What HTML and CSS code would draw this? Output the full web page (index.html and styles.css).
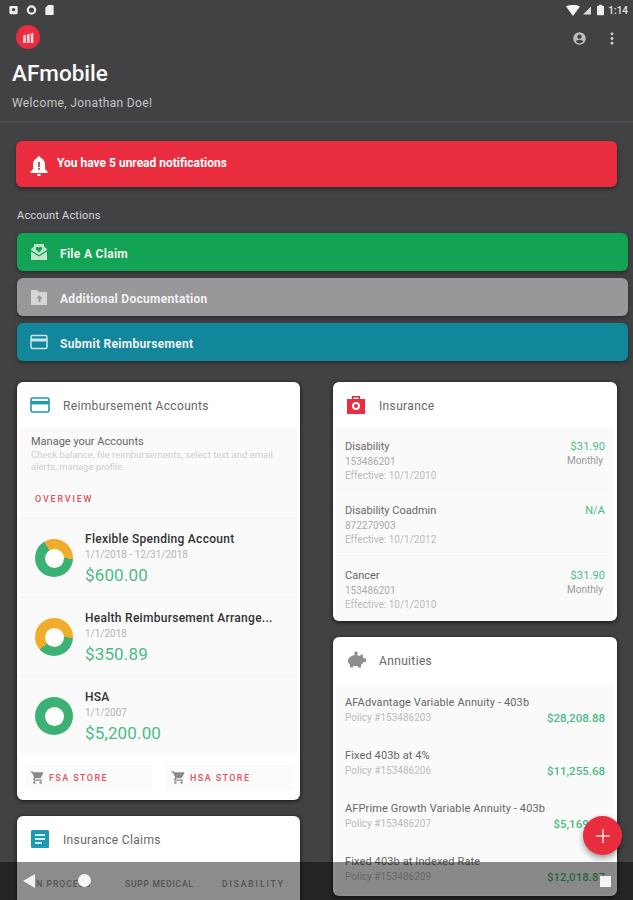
FILE: index.html
```html
<!DOCTYPE html>
<html lang="en">
<head>
<meta charset="utf-8">
<title>AFmobile</title>
<link rel="stylesheet" href="styles.css">
</head>
<body>
<div class="screen">
  <div class="status">
    <div class="status-left">
      <svg class="st" viewBox="0 0 12 12"><rect x="1.500" y="1.500" width="9" height="9" rx="1.500" fill="#eee"/><circle cx="6" cy="5.500" r="1.800" fill="#444"/></svg>
      <svg class="st" viewBox="0 0 12 12"><circle cx="6" cy="6" r="4" fill="none" stroke="#eee" stroke-width="2.400"/></svg>
      <svg class="st" viewBox="0 0 12 12"><path d="M4.500 .5h5a1 1 0 0 1 1 1v9a1 1 0 0 1-1 1h-7a1 1 0 0 1-1-1V3.500z" fill="#eee"/></svg>
    </div>
    <div class="status-right">
      <svg class="wifi" viewBox="0 0 14 11"><path d="M0 1.500Q7-2 14 1.500L7 11z" fill="#f2f2f2"/></svg>
      <svg class="sig" viewBox="0 0 9 9"><path d="M9 0v9H0z" fill="#ddd"/></svg>
      <svg class="bat" viewBox="0 0 8 12"><path d="M2.500 0h3v1H7a1 1 0 0 1 1 1v9a1 1 0 0 1-1 1H1a1 1 0 0 1-1-1V2a1 1 0 0 1 1-1h1.500z" fill="#eee"/></svg>
      <span class="time">1:14</span>
    </div>
  </div>

  <header class="head">
    <div class="toolbar">
      <div class="logo">
        <svg viewBox="0 0 12 12" width="13" height="13"><path d="M1 4l2.500-.6V11H1zM4.500 3.200L7 2.600V11H4.500zM8 2.400l2.500-.8V11H8z" fill="#f7d3d7"/></svg>
      </div>
      <div class="tool-icons">
        <svg class="acct" viewBox="0 0 24 24"><path fill="#bdbdbd" d="M12 2a10 10 0 1 0 0 20 10 10 0 0 0 0-20zm0 3.500a3.500 3.500 0 1 1 0 7 3.500 3.500 0 0 1 0-7zm0 14.300a7.700 7.700 0 0 1-6-2.900c1-1.800 3.800-2.900 6-2.900s5 1.100 6 2.900a7.700 7.700 0 0 1-6 2.900z"/></svg>
        <svg class="more" viewBox="0 0 4 14"><circle cx="2" cy="2" r="1.500" fill="#d5d5d5"/><circle cx="2" cy="7" r="1.500" fill="#d5d5d5"/><circle cx="2" cy="12" r="1.500" fill="#d5d5d5"/></svg>
      </div>
    </div>
    <h1 class="title">AFmobile</h1>
    <p class="welcome">Welcome, Jonathan Doe!</p>
  </header>

  <main class="content">
    <div class="alert">
      <svg class="alert-icon" viewBox="0 0 18 20"><path fill="#fff" d="M9 0a1.500 1.500 0 0 1 1.500 1.500v.6C13.200 2.800 15 5.200 15 8v5l2.500 2.500V17H.5v-1.500L3 13V8c0-2.800 1.800-5.200 4.500-5.900v-.6A1.500 1.500 0 0 1 9 0zM7 18h4a2 2 0 0 1-4 0z"/><rect x="8.100" y="6" width="1.800" height="5" fill="#e92d3f"/><rect x="8.100" y="12" width="1.800" height="1.800" fill="#e92d3f"/></svg>
      <span>You have 5 unread notifications</span>
    </div>

    <div class="section-label">Account Actions</div>

    <div class="actions">
      <div class="action green">
        <svg class="action-icon" viewBox="0 0 18 18"><path fill="#bfe6cd" d="M1 6l3-2.500V1h10v2.500L17 6v11H1z"/><path fill="#12a454" d="M1 7l8 5 8-5v1.500l-8 5-8-5z"/><path fill="#12a454" d="M9 9.500L6.200 6.700a1.700 1.700 0 0 1 2.400-2.400l.4.400.4-.4a1.700 1.700 0 0 1 2.400 2.400z"/></svg>
        <span>File A Claim</span>
      </div>
      <div class="action grey">
        <svg class="action-icon" viewBox="0 0 18 18"><path fill="#d5d5d7" d="M1 2h6l2 2h8v13H1z"/><path fill="#98989b" d="M9.500 7l3 3.500h-2V14h-2v-3.500h-2z"/></svg>
        <span>Additional Documentation</span>
      </div>
      <div class="action teal">
        <svg class="action-icon" viewBox="0 0 18 18"><rect x="1" y="2.500" width="16" height="13" rx="1.500" fill="none" stroke="#c7e5ea" stroke-width="1.500"/><rect x="1" y="5.500" width="16" height="3" fill="#c7e5ea"/></svg>
        <span>Submit Reimbursement</span>
      </div>
    </div>

    <div class="columns">
      <div class="col">
        <section class="card">
          <div class="card-head">
            <svg class="card-icon" viewBox="0 0 20 20"><rect x="1" y="3" width="18" height="14" rx="1.500" fill="none" stroke="#1c9bb0" stroke-width="1.600"/><rect x="1" y="6" width="18" height="3.400" fill="#1c9bb0"/></svg>
            <span>Reimbursement Accounts</span>
          </div>
          <div class="panel">
            <div class="intro">
              <div class="intro-title">Manage your Accounts</div>
              <div class="intro-text">Check balance, file reimbursements, select text and email alerts, manage profile.</div>
              <div class="overview">OVERVIEW</div>
            </div>
            <div class="acct-row">
              <div class="donut d1"></div>
              <div class="acct-info">
                <div class="acct-name">Flexible Spending Account</div>
                <div class="acct-date">1/1/2018 - 12/31/2018</div>
                <div class="acct-amt">$600.00</div>
              </div>
            </div>
            <div class="acct-row">
              <div class="donut d2"></div>
              <div class="acct-info">
                <div class="acct-name">Health Reimbursement Arrange...</div>
                <div class="acct-date">1/1/2018</div>
                <div class="acct-amt">$350.89</div>
              </div>
            </div>
            <div class="acct-row">
              <div class="donut d3"></div>
              <div class="acct-info">
                <div class="acct-name">HSA</div>
                <div class="acct-date">1/1/2007</div>
                <div class="acct-amt">$5,200.00</div>
              </div>
            </div>
          </div>
          <div class="stores">
            <div class="store">
              <svg class="cart" viewBox="0 0 24 24"><path fill="#8a8a8a" d="M7 18a2 2 0 1 0 0 4 2 2 0 0 0 0-4zM1 2v2h2l3.600 7.600-1.400 2.400c-.7 1.300.3 3 1.800 3h12v-2H7.400l1.100-2h7.500c.7 0 1.400-.4 1.700-1L21.300 5c.4-.7-.1-1.500-.9-1.500H5.200L4.300 2zm16 16a2 2 0 1 0 0 4 2 2 0 0 0 0-4z"/></svg>
              <span>FSA STORE</span>
            </div>
            <div class="store">
              <svg class="cart" viewBox="0 0 24 24"><path fill="#8a8a8a" d="M7 18a2 2 0 1 0 0 4 2 2 0 0 0 0-4zM1 2v2h2l3.600 7.600-1.400 2.400c-.7 1.300.3 3 1.800 3h12v-2H7.400l1.100-2h7.500c.7 0 1.400-.4 1.700-1L21.300 5c.4-.7-.1-1.500-.9-1.500H5.200L4.300 2zm16 16a2 2 0 1 0 0 4 2 2 0 0 0 0-4z"/></svg>
              <span>HSA STORE</span>
            </div>
          </div>
        </section>

        <section class="card">
          <div class="card-head">
            <svg class="card-icon" viewBox="0 0 20 20"><rect x="1" y="1" width="18" height="18" rx="1.500" fill="#1c9bb0"/><rect x="5" y="5" width="10" height="2" fill="#d5eef2"/><rect x="5" y="9" width="10" height="2" fill="#d5eef2"/><rect x="5" y="13" width="7" height="2" fill="#d5eef2"/></svg>
            <span>Insurance Claims</span>
          </div>
          <div class="tabs">
            <span class="tab-a">IN PROCESS</span><span class="tab-b">SUPP MEDICAL</span><span class="tab-c">DISABILITY</span>
          </div>
        </section>
      </div>

      <div class="col">
        <section class="card">
          <div class="card-head">
            <svg class="card-icon" viewBox="0 0 20 20"><path fill="#e92d3f" fill-rule="evenodd" d="M6 1h8v3h5v15H1V4h5zm1.500 1.500V4h5V2.500zM10 7a4 4 0 1 0 0 8 4 4 0 0 0 0-8zm0 2a2 2 0 1 1 0 4 2 2 0 0 1 0-4z"/></svg>
            <span>Insurance</span>
          </div>
          <div class="panel">
            <div class="ins-row">
              <div class="ins-left">
                <div class="ins-name">Disability</div>
                <div class="ins-sub">153486201</div>
                <div class="ins-eff">Effective: 10/1/2010</div>
              </div>
              <div class="ins-right">
                <div class="ins-amt">$31.90</div>
                <div class="ins-freq">Monthly</div>
              </div>
            </div>
            <div class="ins-row">
              <div class="ins-left">
                <div class="ins-name">Disability Coadmin</div>
                <div class="ins-sub">872270903</div>
                <div class="ins-eff">Effective: 10/1/2012</div>
              </div>
              <div class="ins-right">
                <div class="ins-amt">N/A</div>
              </div>
            </div>
            <div class="ins-row">
              <div class="ins-left">
                <div class="ins-name">Cancer</div>
                <div class="ins-sub">153486201</div>
                <div class="ins-eff">Effective: 10/1/2010</div>
              </div>
              <div class="ins-right">
                <div class="ins-amt">$31.90</div>
                <div class="ins-freq">Monthly</div>
              </div>
            </div>
          </div>
        </section>

        <section class="card">
          <div class="card-head">
            <svg class="card-icon" viewBox="0 0 20 20"><path transform="matrix(-1 0 0 1 20 0)" fill="#8d8d8d" d="M10 1.500a1.800 1.800 0 1 1 0 3.600 1.800 1.800 0 0 1 0-3.600zM3 4.500c1.500 0 2.600.6 3.400 1.400C7.500 5.300 8.700 5 10 5c4.200 0 8 2.500 8 6 0 1.500-.7 2.800-2 3.800V17.500h-3V16H8v1.500H5v-2.800C3.800 14 3 13 2.500 12H0V8.500h2c.3-.7.800-1.300 1.300-1.800z"/></svg>
            <span>Annuities</span>
          </div>
          <div class="panel">
            <div class="ann-row">
              <div class="ann-name">AFAdvantage Variable Annuity - 403b</div>
              <div class="ann-line"><span class="ann-policy">Policy #153486203</span><span class="ann-amt">$28,208.88</span></div>
            </div>
            <div class="ann-row">
              <div class="ann-name">Fixed 403b at 4%</div>
              <div class="ann-line"><span class="ann-policy">Policy #153486206</span><span class="ann-amt">$11,255.68</span></div>
            </div>
            <div class="ann-row">
              <div class="ann-name">AFPrime Growth Variable Annuity - 403b</div>
              <div class="ann-line"><span class="ann-policy">Policy #153486207</span><span class="ann-amt">$5,169.50</span></div>
            </div>
            <div class="ann-row">
              <div class="ann-name">Fixed 403b at Indexed Rate</div>
              <div class="ann-line"><span class="ann-policy">Policy #153486209</span><span class="ann-amt">$12,018.87</span></div>
            </div>
          </div>
        </section>
      </div>
    </div>
  </main>

  <div class="fab">
    <svg viewBox="0 0 14 14" width="14" height="14"><path d="M6.200 0h1.600v6.200H14v1.600H7.800V14H6.200V7.800H0V6.200h6.200z" fill="#f8d5d9"/></svg>
  </div>

  <div class="navbar">
    <svg class="nav-back" viewBox="0 0 12 14"><path d="M12 0v14L0 7z" fill="#f0f0f0"/></svg>
    <div class="nav-home"></div>
    <div class="nav-recent"></div>
  </div>
</div>
</body>
</html>
```

FILE: styles.css
```css
* { box-sizing: border-box; }
html, body { margin: 0; padding: 0; }
body { font-family: Roboto, "Liberation Sans", sans-serif; background: #424244; }
.screen { position: relative; width: 633px; height: 900px; overflow: hidden; background: #424244; color: #fff; }

.status { height: 24px; display: flex; justify-content: space-between; align-items: center; padding: 0 5px 4px 8px; }
.status-left { display: flex; gap: 7px; align-items: center; }
.st { width: 11px; height: 12px; display: block; }
.status-right { display: flex; align-items: center; }
.wifi { width: 14px; height: 11px; display: block; margin-right: 3px; }
.sig { width: 8px; height: 9px; display: block; margin-right: 6px; }
.bat { width: 7px; height: 12px; display: block; margin-right: 4px; }
.time { font-size: 10px; font-weight: 500; color: #e8e8e8; }

.head { height: 98px; padding: 0 0 0 12px; border-bottom: 1px solid #505052; }
.toolbar { display: flex; justify-content: space-between; align-items: flex-start; height: 26px; padding-right: 19px; }
.logo { width: 24px; height: 24px; margin-left: 4px; margin-top: 1px; border-radius: 50%; background: #e92d3f; display: flex; align-items: center; justify-content: center; }
.tool-icons { display: flex; align-items: center; gap: 23px; height: 28px; }
.acct { width: 15px; height: 15px; display: block; }
.more { width: 4px; height: 13px; display: block; }
.title { margin: 10px 0 0; font-size: 22.500px; line-height: 26px; font-weight: 500; color: #fafafa; }
.welcome { margin: 10px 0 0; font-size: 12px; line-height: 14px; letter-spacing: .36px; color: #c4c4c4; }

.content { padding: 19px 0 0 17px; }
.alert { width: 601px; height: 46px; margin-left: -1px; border-radius: 6px; background: #e92d3f; box-shadow: 0 2px 4px rgba(0,0,0,.4); display: flex; align-items: center; padding: 0 0 3px 14px; gap: 9px; font-size: 12px; font-weight: 700; color: #fff; }
.alert-icon { width: 18px; height: 20px; display: block; margin-top: 6px; }
.section-label { margin-top: 22px; font-size: 11px; line-height: 14px; letter-spacing: .2px; color: #d6d6d6; }
.actions { margin-top: 10px; display: flex; flex-direction: column; gap: 7px; }
.action { width: 611px; height: 38px; border-radius: 6px; display: flex; align-items: center; padding: 4px 0 0 13px; gap: 12px; font-size: 12px; font-weight: 700; letter-spacing: .3px; color: #f1f1f1; box-shadow: 0 2px 4px rgba(0,0,0,.35); }
.action-icon { width: 18px; height: 18px; display: block; margin-top: -5px; }
.green { background: #12a454; }
.grey { background: #98989b; }
.teal { background: #12879c; }

.columns { margin-top: 21px; display: flex; gap: 33px; align-items: flex-start; }
.col { width: 284px; display: flex; flex-direction: column; gap: 16px; }
.col:first-child { width: 283px; }

.card { background: #fff; border-radius: 6px; box-shadow: 0 1px 4px rgba(0,0,0,.75); color: #555; padding-bottom: 1px; }
.card-head { height: 46px; display: flex; align-items: center; padding: 2px 0 0 13px; gap: 13px; font-size: 12px; letter-spacing: .35px; color: #666; }
.card-icon { width: 20px; height: 20px; display: block; margin-top: -2px; }
.panel { margin: 0 3px; background: #fafafa; }

.intro { padding: 7px 11px 0; height: 90px; }
.intro-title { font-size: 11px; line-height: 14px; color: #666; }
.intro-text { font-size: 9.500px; line-height: 12px; color: #cfcfcf; }
.overview { margin: 20px 0 0 4px; font-size: 9px; line-height: 12px; letter-spacing: 1.800px; font-weight: 500; color: #e8505f; }
.acct-row { height: 79px; display: flex; align-items: center; gap: 12px; padding: 2px 0 0 15px; border-top: 1px solid #f2f2f2; }
.donut { width: 38px; height: 38px; border-radius: 50%; flex: none; position: relative; margin-top: -2px; }
.donut::after { content: ""; position: absolute; inset: 9.500px; border-radius: 50%; background: #fff; }
.d1 { background: conic-gradient(#f0ad2b 0deg 92deg, #3bb273 92deg 329deg, #f0ad2b 329deg); }
.d2 { background: conic-gradient(#f0ad2b 0deg 92deg, #3bb273 92deg 228deg, #f0ad2b 228deg); }
.d3 { background: #3bb273; }
.acct-info { min-width: 0; padding-bottom: 2px; }
.acct-name { font-size: 12px; line-height: 15px; font-weight: 500; color: #333; letter-spacing: .28px; white-space: nowrap; }
.acct-date { font-size: 10px; line-height: 13px; color: #b5b5b5; margin-top: 1px; }
.acct-amt { font-size: 17px; line-height: 20px; color: #4cbb83; margin-top: 4px; letter-spacing: .15px; }

.stores { height: 44px; display: flex; gap: 14px; padding: 10px 7px 9px 8px; }
.store { flex: 1; display: flex; align-items: center; gap: 4px; padding-left: 5px; background: #fbfbfb; font-size: 9px; font-weight: 500; letter-spacing: 1.400px; color: #e8505f; }
.cart { width: 15px; height: 15px; display: block; }

.tabs { height: 80px; padding: 17px 0 0 16px; display: flex; font-size: 8.500px; letter-spacing: 1px; font-weight: 500; color: #999; white-space: nowrap; }
.tab-a { width: 92px; }
.tab-b { width: 97px; letter-spacing: .75px; }
.tab-c { letter-spacing: 1.900px; }

.ins-row { height: 65px; display: flex; justify-content: space-between; padding: 13px 9px 0 9px; border-top: 1px solid #f4f4f4; }
.ins-row:first-child { height: 62px; padding-top: 12px; border-top: 0; }
.ins-name { font-size: 11px; line-height: 14px; color: #666; }
.ins-sub { font-size: 10px; line-height: 13px; color: #aaa; margin-top: 1px; }
.ins-eff { font-size: 10px; line-height: 15px; color: #bbb; }
.ins-right { text-align: right; }
.ins-amt { font-size: 11px; line-height: 14px; color: #4cbb83; letter-spacing: .1px; }
.ins-freq { font-size: 10px; line-height: 14px; color: #999; padding-right: 2px; }

.ann-row { height: 53px; padding: 13px 9px 0 9px; }
.ann-name { font-size: 11px; line-height: 14px; letter-spacing: .12px; color: #666; white-space: nowrap; }
.ann-line { display: flex; justify-content: space-between; align-items: center; margin-top: 1px; }
.ann-policy { font-size: 10px; line-height: 14px; color: #bbb; }
.ann-amt { font-size: 11.500px; line-height: 14px; font-weight: 500; color: #4cbb83; }

.fab { position: absolute; left: 583px; top: 816px; width: 39px; height: 39px; border-radius: 50%; background: #e92d3f; box-shadow: 0 3px 6px rgba(0,0,0,.4); display: flex; align-items: center; justify-content: center; }

.navbar { position: absolute; left: 0; right: 0; bottom: 0; height: 38px; background: rgba(0,0,0,.45); }
.nav-back { position: absolute; left: 23px; top: 12px; width: 12px; height: 14px; }
.nav-home { position: absolute; left: 78px; top: 12px; width: 13px; height: 13px; border-radius: 50%; background: #f5f5f5; }
.nav-recent { position: absolute; left: 600px; top: 14px; width: 11px; height: 11px; background: #f5f5f5; }
```
